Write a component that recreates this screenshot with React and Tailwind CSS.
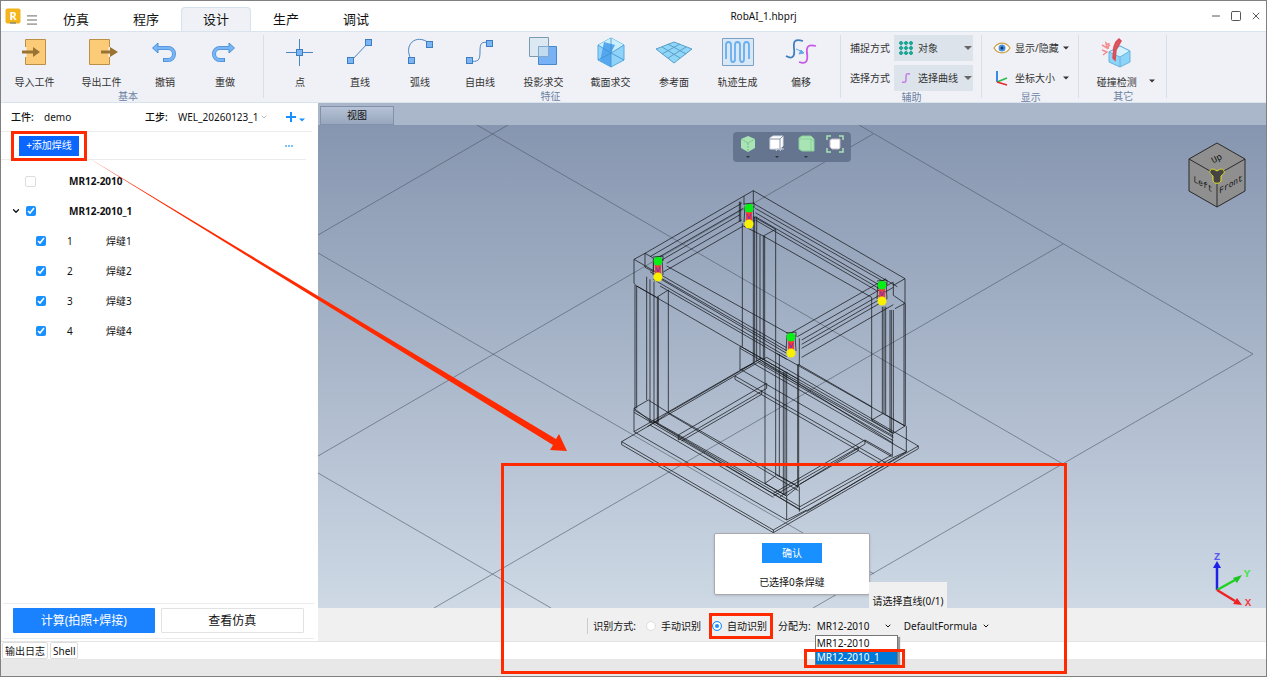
import { useState } from 'react';
import { ChevronDown, Menu, Minus, Square, X } from 'lucide-react';

const tabs = ['仿真', '程序', '设计', '生产', '调试'];

const welds = [1, 2, 3, 4];

/* ---------- ribbon icons, all on a 32x32 grid ---------- */

function Icon({ children }) {
  return (
    <svg viewBox="0 0 32 32" className="h-8 w-8" fill="none" aria-hidden="true">
      {children}
    </svg>
  );
}

const node = { fill: '#7ab5f5', stroke: '#3f7cc0', width: 6, height: 6 };

const icons = {
  import: (
    <Icon>
      <path d="M6.500 3.500h20v25h-20z" fill="#fbcb78" stroke="#bd8f45" />
      <path d="M6.500 11v10" stroke="#f0f1f6" strokeWidth="2" />
      <path d="M3 14.500h11V11l7 5-7 5v-3.500H3z" fill="#9a7232" />
    </Icon>
  ),
  export: (
    <Icon>
      <path d="M3.500 3.500h20v25h-20z" fill="#fbcb78" stroke="#bd8f45" />
      <path d="M23.500 11v10" stroke="#f0f1f6" strokeWidth="2" />
      <path d="M15 14.500h9V11l8 5-8 5v-3.500h-9z" fill="#9a7232" />
    </Icon>
  ),
  undo: (
    <Icon>
      <path d="M7 12h12a5.500 5.500 0 0 1 0 12h-5" stroke="#4a8fd6" strokeWidth="4" />
      <path d="M9 7v10l-5.500-5z" fill="#7ab5f5" stroke="#4a8fd6" />
      <path d="M7 12h12a5.500 5.500 0 0 1 0 12h-4" stroke="#7ab5f5" strokeWidth="2.500" />
    </Icon>
  ),
  redo: (
    <Icon>
      <path d="M21 12H11a5.500 5.500 0 0 0 0 12h5" stroke="#4a8fd6" strokeWidth="4" />
      <path d="M20 7v10l5.500-5z" fill="#7ab5f5" stroke="#4a8fd6" />
      <path d="M21 12H11a5.500 5.500 0 0 0 0 12h4" stroke="#7ab5f5" strokeWidth="2.500" />
    </Icon>
  ),
  point: (
    <Icon>
      <path d="M2 16.500h27M15.500 3v27" stroke="#4a86c4" />
      <rect x="12.500" y="13.500" {...node} />
    </Icon>
  ),
  line: (
    <Icon>
      <path d="M7 25 25 6" stroke="#4a86c4" />
      <rect x="3.500" y="21.500" {...node} />
      <rect x="21.500" y="3.500" {...node} />
    </Icon>
  ),
  arc: (
    <Icon>
      <path d="M7 23C-1 9 12-3 25 7" stroke="#4a86c4" />
      <rect x="4.500" y="21.500" {...node} />
      <rect x="22.500" y="5.500" {...node} />
    </Icon>
  ),
  free: (
    <Icon>
      <path d="M5 25c9 1 11 0 11-9S17 5 26 7" stroke="#4a86c4" />
      <rect x="2.500" y="21.500" {...node} />
      <rect x="22.500" y="4.500" {...node} />
    </Icon>
  ),
  project: (
    <Icon>
      <path d="M10.500 10.500h18v18h-18z" fill="#78b2f4" stroke="#4787cb" />
      <path d="M1.500 1.500h19v19h-19z" fill="#d9e8f2" fillOpacity=".9" stroke="#7b9cae" />
      <path d="M10.500 20.500v-10h10v10z" fill="#c3dbee" stroke="#7fa9cd" />
    </Icon>
  ),
  section: (
    <Icon>
      <path d="m16 2 13 7v15l-13 7-13-7V9z" fill="#8fd4f8" stroke="#58aada" />
      <path d="m16 2 13 7-13 8L3 9z" fill="#c9effe" />
      <path d="M9 6 20 9l-4 8v14L5 25z" fill="#55a7ef" />
      <path d="m3 9 13 8 13-8M16 17v14M16 2v15M3 24l13-7 13 7" stroke="#3f8fd0" strokeWidth=".8" />
    </Icon>
  ),
  plane: (
    <svg viewBox="0 0 38 32" className="h-8 w-10" fill="none" aria-hidden="true">
      <path d="m1 13 18-7 18 7-18 14z" fill="#8fd6f8" stroke="#5a9fc8" />
      <path d="m7 18 18-10M13 22 31 11M7 11l18 11M13 8l18 10" stroke="#5a9fc8" />
    </svg>
  ),
  track: (
    <Icon>
      <path d="M.500 2.500h31v27H.500z" fill="#d8e8f6" stroke="#7ba0c2" />
      <path
        d="M4 23V9c0-4 5-4 5 0v14c0 4 4 4 4 0V9c0-4 5-4 5 0v14c0 4 4 4 4 0V9c0-4 5-4 5 0v14"
        stroke="#6aaeee"
        strokeWidth="1.800"
      />
    </Icon>
  ),
  offset: (
    <Icon>
      <path d="M1 20c7 4 9 0 8-8S11 3 18 5" stroke="#3f7fbd" strokeWidth="1.800" />
      <path d="M14 26c8 3 9-2 8-9s2-9 9-7" stroke="#c659e8" strokeWidth="1.800" />
      <path d="m11 13 7 3m1 1-5 1 2-4z" stroke="#66a9ea" fill="#66a9ea" />
    </Icon>
  ),
  collide: (
    <Icon>
      <path d="m8 16 11-6 10 5v11l-10 5-11-5z" fill="#8ed3f8" stroke="#68b2de" />
      <path d="m8 16 11-6 10 5-10 6z" fill="#d5f2fe" stroke="#68b2de" />
      <path d="M19 21v10" stroke="#68b2de" />
      <path d="m1 9 5 3-1-5 4 3M2 19l4-3-5-2M8 7l-1 6" stroke="#f48c90" strokeWidth="1.500" />
      <path d="m15 6 3-3 2 2-5 9-1 10-2-2 1-11z" fill="#e05560" stroke="#d94b56" strokeWidth="1.500" />
    </Icon>
  ),
};

const basicTools = [
  ['import', '导入工件', true],
  ['export', '导出工件', true],
  ['undo', '撤销'],
  ['redo', '重做'],
];

const featureTools = [
  ['point', '点'],
  ['line', '直线'],
  ['arc', '弧线'],
  ['free', '自由线'],
  ['project', '投影求交', true],
  ['section', '截面求交', true],
  ['plane', '参考面'],
  ['track', '轨迹生成', true],
  ['offset', '偏移'],
];

function Tool({ icon, label, wide }) {
  return (
    <button className={`flex flex-col items-center gap-[6px] pt-[1px] ${wide ? 'w-[67px]' : 'w-[60px]'}`}>
      {icons[icon]}
      <span className="text-[10px] leading-4">{label}</span>
    </button>
  );
}

function Group({ title, className = '', children }) {
  return (
    <section className={`flex flex-col border-r border-[#d6e0ea] ${className}`}>
      <div className="flex h-[56px]">{children}</div>
      <h2 className="text-center text-[10px] leading-3 text-[#6b82a3]">{title}</h2>
    </section>
  );
}

function Caret({ className = 'w-2' }) {
  return (
    <svg viewBox="0 0 8 4" className={`h-1 ${className}`} aria-hidden="true">
      <path d="M0 0h8L4 4z" fill="currentColor" />
    </svg>
  );
}

function ModeSelect({ id, label, value, icon }) {
  return (
    <div className="flex items-center gap-1">
      <label htmlFor={id} className="text-[10px]">{label}</label>
      <div className="relative flex h-[26px] w-[79px] items-center bg-[#dce3eb]">
        <span className="pointer-events-none absolute left-1">{icon}</span>
        <select id={id} className="h-full w-full appearance-none pl-6 text-[10px] outline-none">
          <option>{value}</option>
        </select>
        <Caret className="pointer-events-none absolute right-[1px] w-2 text-[#666]" />
      </div>
    </div>
  );
}

function TitleBar() {
  const [active, setActive] = useState('设计');
  return (
    <header className="flex h-[30px] items-end bg-white">
      <div className="flex h-full items-center gap-1 pl-1">
        <svg viewBox="0 0 16 16" className="h-4 w-4" aria-label="RobAI">
          <rect x=".500" y=".500" width="15" height="15" rx="2" fill="#f3b51b" />
          <path d="M5 15h6" stroke="#59708a" />
          <text x="8" y="12" textAnchor="middle" fontSize="11" fontWeight="700" fill="#fff">R</text>
        </svg>
        <button aria-label="菜单" className="pt-2">
          <Menu className="h-[14px] w-[14px] text-[#555]" strokeWidth={1.5} />
        </button>
      </div>
      <nav className="ml-[2px] flex">
        {tabs.map((t) => (
          <button
            key={t}
            onClick={() => setActive(t)}
            className={`h-6 w-[70px] rounded-t-sm border border-b-0 text-[13px] ${
              t === active ? 'border-[#d6e2ee] bg-[#f0f1f6]' : 'border-transparent'
            }`}
          >
            {t}
          </button>
        ))}
      </nav>
      <h1 className="flex-1 self-center pr-[74px] text-center text-[10px]">RobAI_1.hbprj</h1>
      <div className="flex items-center gap-2 self-center pr-1 text-[#555]">
        <button aria-label="最小化"><Minus className="h-3 w-3" strokeWidth={2} /></button>
        <button aria-label="最大化"><Square className="h-3 w-3" strokeWidth={2} /></button>
        <button aria-label="关闭"><X className="h-3 w-3" strokeWidth={2} /></button>
      </div>
    </header>
  );
}

function Ribbon() {
  return (
    <div className="flex h-[72px] border-y border-[#d9e3ed] bg-[#f0f1f6] pt-[3px] pb-1 text-[#333]">
      <Group title="基本" className="pr-2">
        {basicTools.map(([icon, label, wide]) => (
          <Tool key={icon} icon={icon} label={label} wide={wide} />
        ))}
      </Group>
      <Group title="特征" className="pr-[9px] pl-[6px]">
        {featureTools.map(([icon, label, wide]) => (
          <Tool key={icon} icon={icon} label={label} wide={wide} />
        ))}
      </Group>
      <Group title="辅助" className="pr-2 pl-[9px]">
        <div className="flex flex-col gap-1">
          <ModeSelect
            id="snap"
            label="捕捉方式"
            value="对象"
            icon={
              <svg viewBox="0 0 16 16" className="h-4 w-4" stroke="#7fb8e8" aria-hidden="true">
                <path d="M3 1v14M8 1v14M13 1v14M1 3h14M1 8h14M1 13h14" />
                {[3, 8, 13].map((x) => [3, 8, 13].map((y) => (
                  <circle key={`${x}-${y}`} cx={x} cy={y} r="1.500" fill="#1aa88f" stroke="#1aa88f" />
                )))}
              </svg>
            }
          />
          <ModeSelect
            id="pick"
            label="选择方式"
            value="选择曲线"
            icon={
              <svg viewBox="0 0 16 16" className="h-4 w-4" fill="none" aria-hidden="true">
                <path d="M4 12c4 1 4 0 4-4s0-5 4-4" stroke="#c77ae8" strokeWidth="1.500" />
              </svg>
            }
          />
        </div>
      </Group>
      <Group title="显示" className="pr-[9px] pl-[11px]">
        <div className="flex flex-col gap-1">
          <button className="flex h-[26px] items-center gap-1 text-[10px]">
            <svg viewBox="0 0 18 12" className="h-3 w-[18px]" fill="none" aria-hidden="true">
              <path d="M1 6c4-6.500 12-6.500 16 0-4 6.500-12 6.500-16 0z" fill="#fff" stroke="#cda144" strokeWidth="1.300" />
              <circle cx="9" cy="6" r="3.500" fill="#4b90dc" />
              <circle cx="9" cy="6" r="1.500" fill="#163a66" />
            </svg>
            显示/隐藏
            <Caret className="ml-auto w-[6px]" />
          </button>
          <button className="flex h-[26px] items-center gap-1 text-[10px]">
            <svg viewBox="0 0 18 16" className="h-4 w-[18px]" fill="none" strokeWidth="1.800" aria-hidden="true">
              <path d="M4 1v11" stroke="#2180e8" />
              <path d="m4 12 10-4" stroke="#2dbb4e" />
              <path d="m4 12 10 3" stroke="#e8282f" />
            </svg>
            坐标大小
            <Caret className="ml-auto w-[6px]" />
          </button>
        </div>
      </Group>
      <Group title="其它" className="pr-2 pl-[10px]">
        <button className="flex items-end gap-1">
          <span className="flex h-full w-14 flex-col items-center gap-[6px] pt-[1px]">
            {icons.collide}
            <span className="text-[10px] leading-4">碰撞检测</span>
          </span>
          <Caret className="mr-[3px] mb-[7px] w-[6px]" />
        </button>
      </Group>
    </div>
  );
}

function SidePanel() {
  const box = 'h-[10px] w-[10px] accent-[#1890ff]';
  return (
    <aside className="flex w-[317px] shrink-0 flex-col bg-white pr-1 text-[10px]">
      <div className="mr-[2px] flex h-[29px] items-center border-b border-[#ececec] pl-[10px]">
        <span className="w-[33px] font-medium whitespace-nowrap">工件:</span>
        <span className="w-[101px]">demo</span>
        <label htmlFor="step" className="w-[33px] font-medium whitespace-nowrap">工步:</label>
        <span className="flex items-center">
          <select id="step" className="w-[82px] appearance-none overflow-hidden outline-none">
            <option>WEL_20260123_1</option>
          </select>
          <ChevronDown className="h-2 w-2 text-[#999]" />
        </span>
        <button aria-label="新增工步" className="ml-[18px] flex items-end gap-[3px] text-[#1890ff]">
          <svg viewBox="0 0 10 10" className="h-[10px] w-[10px]" stroke="currentColor" strokeWidth="2" aria-hidden="true">
            <path d="M5 0v10M0 5h10" />
          </svg>
          <Caret className="w-[6px]" />
        </button>
      </div>
      <div className="mr-2 flex h-[28px] items-center justify-between border-b border-[#ececec] pr-[9px] pl-[10px]">
        <span className="flex h-[30px] items-center border-[3px] border-[#ff2a00] px-[5px]">
          <button className="h-5 w-[60px] bg-[#0a66ff] text-white">+添加焊线</button>
        </span>
        <button aria-label="更多" className="flex gap-[1px] p-1">
          <i className="h-[2px] w-[2px] bg-[#7cc0ff]" />
          <i className="h-[2px] w-[2px] bg-[#7cc0ff]" />
          <i className="h-[2px] w-[2px] bg-[#7cc0ff]" />
        </button>
      </div>

      <ul className="flex-1 pt-[6px]">
        <li className="flex h-[30px] items-center pl-[24px] font-bold">
          <input
            id="job-0"
            type="checkbox"
            className="h-[11px] w-[11px] appearance-none rounded-[2px] border border-[#ddd]"
          />
          <label htmlFor="job-0" className="pl-[33px]">MR12-2010</label>
        </li>
        <li className="flex h-[30px] items-center pl-[10px] font-bold">
          <ChevronDown className="mr-[5px] h-[10px] w-[10px]" strokeWidth={3} />
          <input id="job-1" type="checkbox" defaultChecked className={box} />
          <label htmlFor="job-1" className="pl-[33px]">MR12-2010_1</label>
        </li>
        {welds.map((n) => (
          <li key={n} className="flex h-[30px] items-center pl-[35px]">
            <input id={`weld-${n}`} type="checkbox" defaultChecked className={box} />
            <span className="w-[60px] pl-[21px]">{n}</span>
            <label htmlFor={`weld-${n}`}>焊缝{n}</label>
          </li>
        ))}
      </ul>

      <div className="mb-[2px] ml-[2px] flex gap-[6px] border-y border-[#ececec] px-[10px] pt-1 pb-[5px] text-[12px]">
        <button className="h-[25px] flex-1 rounded-[1px] bg-[#1a82ff] text-white">计算(拍照+焊接)</button>
        <button className="h-[25px] flex-1 rounded-[1px] border border-[#e2e2e2]">查看仿真</button>
      </div>
    </aside>
  );
}

/* ---------- 3D scene ---------- */

const floor =
  'M477 125 1063 464M318 253 874 574M318 473 551 608M859 125 1253 354 813 608M508 125 318 235M873 134 318 456M1063 244 434 608';

// drawn at 3x and scaled down, origin at (610,180)
const topFrame =
  'M72 238 105 220 402 48 430 32 885 296V370L855 386M72 238V310L80 318 140 352 175 330M120 230 395 70M135 238 400 85M150 243 390 104M170 250 395 120M160 276 400 138' +
  'M402 48V75M430 32V70M430 70 862 320M436 85 830 310M436 98 820 322M436 110 815 330M436 120 800 332M400 138 460 168 785 352M430 110 497 148 460 168' +
  'M885 296 850 316M545 458 828 296M562 470 850 306M575 480 850 322M575 493 820 352M575 505 830 358M575 532 850 374M850 308V346L885 370' +
  'M72 238 530 503M170 258 545 466M120 275 530 512M140 290 530 520M130 298 530 530M150 318 530 538M80 318 390 498 565 598M105 220 130 234V275L105 262zM388 65V125M392 65V125M568 475V555';

const posts =
  'M75 315V688M80 318V685M110 290V660M120 298V730M132 305V730M142 352V730M145 350V728M175 330V698' +
  'M397 130V500M390 500V570M430 110V550M434 110V550M440 110V545M450 165V540M460 168V540M464 168V540M497 148V515' +
  'M465 540V910M497 515V885M508 522V890M520 575V945M525 575V945M530 575V945M563 553V920M566 553V920' +
  'M785 352V720M817 380V700M822 380V700M827 380V702M840 390V758M844 390V760M850 390V760M882 370V738M886 370V738';

const base =
  'M35 785 470 532 925 798 490 1050zV794L490 1058 925 806V798M490 1050V1058' +
  'M72 685 115 660 175 698 130 730zM72 685V755M72 755 455 534M175 698 430 550M72 690 570 980M72 697 570 988M120 735 490 952M130 722 530 948M135 728 570 990M72 755 530 1020' +
  'M175 698 565 920M112 740 140 722M175 700 565 932M205 765 470 610V625L205 780zM215 783 455 643V630M375 588V598L820 855M375 588 830 850M395 570 845 830M430 550 890 815M440 540 850 772M445 548 850 782M455 543 850 790' +
  'M390 498 850 760M390 505 850 768M500 520 885 738M565 553 785 680M390 570 430 550' +
  'M465 910 500 885 565 920 530 948zM530 948V1020L590 990M568 920V995M490 940 765 780 845 825M490 948 745 802V812M510 950 765 792V780M745 812 570 912M570 980 845 825M570 990 845 835M590 995 890 815' +
  'M785 720 820 700 885 738 850 760zM847 760V830M889 738V815L845 835';

function Weld({ x, y }) {
  return (
    <g transform={`translate(${x} ${y})`}>
      <path d="M-4-2-5 14M4-2 5 14" fill="none" stroke="#222" strokeWidth=".8" />
      <path d="M-3 0h6v16h-6z" fill="#f43a32" />
      <circle r="4.500" fill="#08ee16" />
      <circle cy="16" r="4.500" fill="#f8f000" />
      <path d="m-2 6 2 5 2-5" fill="none" stroke="#6a35c8" />
      <path d="M-5-4 5-5v5" fill="none" stroke="#111" strokeWidth=".7" />
    </g>
  );
}

function Scene() {
  return (
    <svg
      viewBox="318 125 948 483"
      preserveAspectRatio="xMidYMid slice"
      className="absolute inset-0 h-full w-full"
      aria-label="工件线框"
    >
      <path d={floor} fill="none" stroke="#4c5868" strokeOpacity=".6" />
      <g transform="translate(610 180) scale(.33333)" fill="none" stroke="#15181c" strokeOpacity=".75" strokeWidth="3">
        <path d={base} />
        <path d={posts} />
        <path d={topFrame} />
      </g>
      <Weld x={749} y={208} />
      <Weld x={658} y={261} />
      <Weld x={882} y={285} />
      <Weld x={791} y={337} />

      {/* view cube */}
      <g stroke="#2a2a2a" strokeLinejoin="round">
        <path d="m1217 143 28 16v32l-28 16-28-16v-32z" fill="#8f8f8f" />
        <path d="m1189 159 28 16 28-16M1217 175v32" fill="none" />
        <path
          d="M1210 171c1-3 4-2 7 0 3-2 6-3 7 0 1 2-1 3-3 5v5c-1 3-7 3-8 0v-5c-2-2-4-3-3-5z"
          fill="#444"
          stroke="#e8e020"
        />
      </g>
      <g fontFamily="Liberation Mono, monospace" fontSize="9" fill="#111" textAnchor="middle">
        <text transform="matrix(.87 .5 0 1 1203 187)">Left</text>
        <text transform="matrix(.87 -.5 0 1 1231 187)">Front</text>
        <text transform="translate(1218 161) rotate(-28)">Up</text>
      </g>

      {/* axis triad */}
      <g strokeWidth="2.500">
        <path d="M1217 590v-22" stroke="#1c22e8" />
        <path d="m1213 568 4-7 4 7z" fill="#1c22e8" />
        <path d="m1217 590 18-10" stroke="#1fd322" />
        <path d="m1233 578 9-3-5 8z" fill="#1fc322" />
        <path d="m1217 590 18 11" stroke="#ee2222" />
        <path d="m1237 598 5 7-9-1z" fill="#ee2222" />
      </g>
      <g fontFamily="Liberation Mono, monospace" fontSize="11" fontWeight="700" textAnchor="middle">
        <text x="1217" y="560" fill="#5a5af0">Z</text>
        <text x="1247" y="577" fill="#3be83f">Y</text>
        <text x="1248" y="606" fill="#f04444">X</text>
      </g>
    </svg>
  );
}

function ViewTools() {
  const cubes = [
    <g key="a">
      <path d="m9 1 7 3v9l-7 4-7-4V4z" fill="#a8e4b4" />
      <path d="m2 4 7 4 7-4M9 8v9" fill="none" stroke="#74b886" strokeDasharray="2 1" />
    </g>,
    <g key="b">
      <path d="m2 3 3-2h10v10l-3 3H2z" fill="#fff" stroke="#d6dce6" />
      <path d="M2 4h10v10M12 4l3-3" fill="none" stroke="#8793a8" />
      <path d="M7 14h9m-8 2 2-3m2 3 2-3" stroke="#c9d2dd" />
    </g>,
    <path key="c" d="m2 3 3-2h9l3 3v12H5l-3-2zM2 4h12l3 2M14 4v12" fill="#a8e4b4" stroke="#8bcf9b" />,
    <g key="d">
      <path d="M1 5V1h4M13 1h4v4M17 13v4h-4M5 17H1v-4" fill="none" stroke="#a8e4b4" strokeWidth="1.500" />
      <path d="m4 5 2-1h8v9l-1 1H6l-2-2z" fill="#fff" stroke="#c3b9c4" />
    </g>,
  ];
  return (
    <div className="absolute top-[7px] left-1/2 flex h-[30px] w-[118px] -translate-x-1/2 justify-around rounded bg-[#65758f] pt-[3px] pr-[2px]">
      {cubes.map((cube, i) => (
        <button key={i} aria-label={`视图 ${i + 1}`} className="flex flex-col items-center gap-[2px]">
          <svg viewBox="0 0 18 18" className="h-[18px] w-[18px]" aria-hidden="true">{cube}</svg>
          {i < 3 && <Caret className="w-1 text-[#333]" />}
        </button>
      ))}
    </div>
  );
}

function Radio({ id, label, checked }) {
  return (
    <span className="flex items-center gap-[5px]">
      <input
        id={id}
        type="radio"
        name="detect"
        defaultChecked={checked}
        className="h-[10px] w-[10px] appearance-none rounded-full border border-[#ddd] bg-white checked:border-[#1890ff] checked:bg-[#1890ff] checked:shadow-[inset_0_0_0_2px_white]"
      />
      <label htmlFor={id}>{label}</label>
    </span>
  );
}

function DetectBar() {
  return (
    <form className="flex h-[33px] items-center justify-center bg-[#f0f0f0] pt-[3px] pr-[7px] text-[10px] whitespace-nowrap">
      <span className="mr-[5px] h-4 w-px bg-[#ccc]" />
      <span className="mr-[10px]">识别方式:</span>
      <Radio id="manual" label="手动识别" />
      <span className="mr-[5px] ml-2 flex h-[26px] items-center border-[3px] border-[#ff2a00] pr-[3px]">
        <Radio id="auto" label="自动识别" checked />
      </span>
      <label htmlFor="assign" className="mr-[6px]">分配为:</label>
      <div className="relative flex items-center">
        <select id="assign" className="w-[67px] appearance-none outline-none">
          <option>MR12-2010</option>
          <option>MR12-2010_1</option>
        </select>
        <ChevronDown className="h-2 w-2" strokeWidth={3} />
        <ul
          role="listbox"
          aria-label="分配为"
          className="absolute top-4 -left-[2px] z-10 w-[83px] border border-[#777] bg-white leading-[14px] shadow-[2px_2px_1px_#999]"
        >
          <li role="option" aria-selected="false" className="pl-[1px]">MR12-2010</li>
          <li role="option" aria-selected="true" className="bg-[#0078d7] pl-[1px] text-white">MR12-2010_1</li>
        </ul>
        <span className="pointer-events-none absolute top-[30px] -left-[13px] z-20 h-[19px] w-[101px] border-[3px] border-[#ff2a00]" />
      </div>
      <span className="ml-3 flex items-center gap-1">
        <select aria-label="配方" className="appearance-none outline-none">
          <option>DefaultFormula</option>
        </select>
        <ChevronDown className="h-2 w-2" strokeWidth={3} />
      </span>
    </form>
  );
}

function Viewer() {
  return (
    <main className="flex min-w-0 flex-1 flex-col">
      <div className="flex h-[22px] items-end bg-[#aab6ca] pl-[2px]">
        <button className="h-[19px] w-[74px] border border-[#8291aa] bg-linear-to-b from-[#b6c2d5] to-[#98a7be] text-[10px]">
          视图
        </button>
      </div>
      <div className="relative flex-1 overflow-hidden bg-linear-to-b from-[#8796b0] to-[#ced9e5]">
        <Scene />
        <ViewTools />
        <div className="absolute bottom-[13px] left-1/2 flex w-[156px] -translate-x-1/2 flex-col items-center gap-[10px] rounded-[2px] border border-[#aaa] bg-white pt-[9px] pb-[3px] text-[10px] shadow">
          <button className="h-5 w-[60px] bg-[#1890ff] text-white">确认</button>
          <p className="leading-[18px]">已选择0条焊缝</p>
        </div>
        <p className="absolute bottom-0 left-1/2 ml-[77px] h-[26px] w-[78px] bg-[#f0f0f0] pt-3 text-center text-[10px] leading-[14px] whitespace-nowrap">
          请选择直线(0/1)
        </p>
      </div>
      <DetectBar />
    </main>
  );
}

export default function App() {
  return (
    <div className="relative flex min-h-screen flex-col overflow-hidden border border-[#808080] bg-white text-[#111] [font-family:'Noto_Sans','Noto_Sans_CJK_SC',sans-serif]">
      <TitleBar />
      <Ribbon />
      <div className="flex flex-1">
        <SidePanel />
        <Viewer />
      </div>
      <footer>
        <div className="flex h-[18px] gap-[2px] border-t border-[#e4e4e4] bg-white pl-[1px] text-[10px] leading-4">
          <button className="rounded-[2px] border border-[#ddd] px-[2px]">输出日志</button>
          <button className="rounded-[2px] border border-[#ddd] px-[2px]">Shell</button>
        </div>
        <div className="h-[17px] bg-[#e8e8e8]" />
      </footer>

      {/* callouts */}
      <svg className="pointer-events-none absolute top-0 left-0 h-[460px] w-[580px]" aria-hidden="true">
        <path d="M86 156 555 438l3-5 8 17-17-1 3-5z" fill="#ff2a00" />
      </svg>
      <div className="pointer-events-none absolute bottom-[2px] left-[500px] h-[211px] w-[566px] border-[3px] border-[#ff2a00]" />
    </div>
  );
}
